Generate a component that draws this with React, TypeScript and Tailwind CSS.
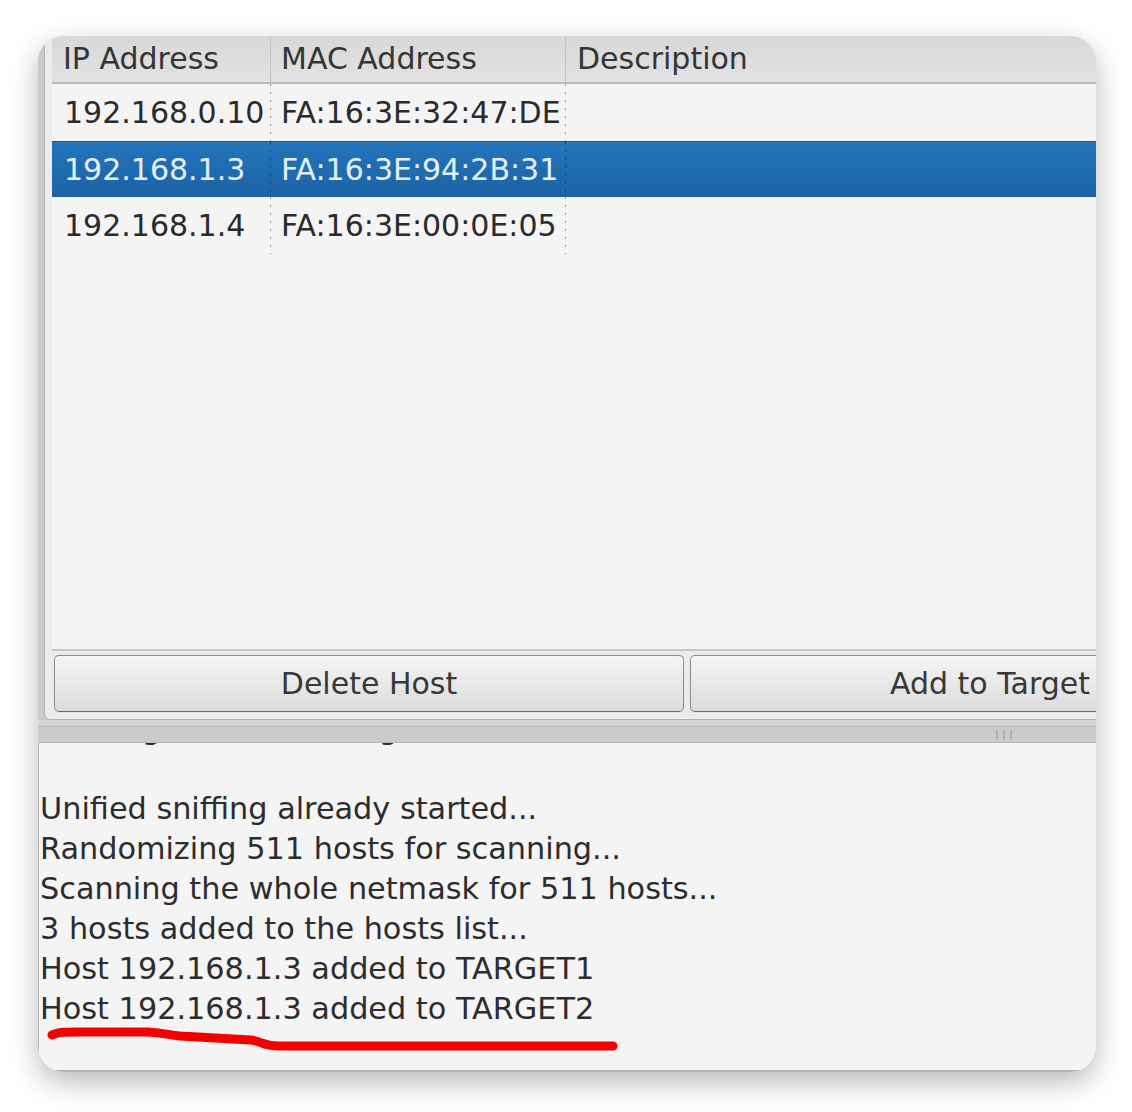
import React from 'react';

const hosts = [
  { ip: '192.168.0.10', mac: 'FA:16:3E:32:47:DE', selected: false },
  { ip: '192.168.1.3', mac: 'FA:16:3E:94:2B:31', selected: true },
  { ip: '192.168.1.4', mac: 'FA:16:3E:00:0E:05', selected: false },
];

const logLines = [
  'Starting Unified sniffing...',
  '',
  'Unified sniffing already started...',
  'Randomizing 511 hosts for scanning...',
  'Scanning the whole netmask for 511 hosts...',
  '3 hosts added to the hosts list...',
  'Host 192.168.1.3 added to TARGET1',
  'Host 192.168.1.3 added to TARGET2',
];

// dotted column divider used inside the rows
const Dots = ({ dark }: { dark?: boolean }) => (
  <div
    className={
      dark
        ? 'w-px self-stretch bg-[repeating-linear-gradient(to_bottom,#16416b_0px,#16416b_2px,transparent_2px,transparent_8px)]'
        : 'w-px self-stretch bg-[repeating-linear-gradient(to_bottom,#8c8c8c_0px,#8c8c8c_2px,transparent_2px,transparent_8px)]'
    }
  />
);

const App = () => {
  return (
    <div className="min-h-screen w-full bg-white pl-[38px] pt-[36px] font-['DejaVu_Sans',sans-serif]">
      <div className="flex h-[1036px] w-[1058px] flex-col overflow-hidden rounded-[26px] bg-[#d6d6d6] shadow-[0_10px_28px_rgba(0,0,0,0.28)]">
        {/* UPPER PANE: hosts list + buttons */}
        <div className="flex h-[684px] shrink-0 bg-[#cacaca] pl-[6px]">
          <div className="flex min-w-0 flex-1 flex-col rounded-bl-[6px] border-b border-l border-[#b2b2b2] bg-[#ececec] pb-[7px] pl-[7px]">
            {/* tree view */}
            <div className="flex min-h-0 flex-1 flex-col border-b-2 border-[#c4c4c4] bg-[#f4f4f4] text-[30px] leading-none">
              {/* header */}
              <div className="flex h-[48px] shrink-0 border-b-2 border-[#bcbcbc] bg-linear-to-b from-[#d8d8d8] to-[#e2e2e2] text-[#353535]">
                <div className="flex w-[218px] shrink-0 items-center pl-[11px]">IP Address</div>
                <div className="w-px bg-[#c2c2c2]" />
                <div className="flex w-[294px] shrink-0 items-center pl-[10px]">MAC Address</div>
                <div className="w-px bg-[#c2c2c2]" />
                <div className="flex flex-1 items-center pl-[11px]">Description</div>
              </div>

              {/* rows */}
              {hosts.map((h) => (
                <div
                  key={h.ip}
                  className={
                    h.selected
                      ? 'flex h-[56px] shrink-0 border-t border-[#1a5a96] bg-linear-to-b from-[#2375bb] to-[#1c63a4] text-[#e4eefa]'
                      : 'flex h-[57px] shrink-0 text-[#2b2b2b]'
                  }
                >
                  <div className="flex w-[218px] shrink-0 items-center pl-[12px]">{h.ip}</div>
                  <Dots dark={h.selected} />
                  <div className="flex w-[294px] shrink-0 items-center pl-[10px]">{h.mac}</div>
                  <Dots dark={h.selected} />
                  <div className="flex-1" />
                </div>
              ))}
            </div>

            {/* buttons */}
            <div className="mt-[4px] flex h-[57px] shrink-0 gap-[6px] pl-[2px] text-[30px] text-[#383838]">
              <button className="flex w-[630px] shrink-0 items-center justify-center rounded-[5px] border border-[#8f8f8f] border-b-[#6e6e6e] bg-linear-to-b from-[#f5f5f5] to-[#dcdcdc] shadow-[0_0_0_1px_#e6e6e6]">
                Delete Host
              </button>
              <button className="flex w-[600px] shrink-0 items-center justify-center rounded-[5px] border border-[#8f8f8f] border-b-[#6e6e6e] bg-linear-to-b from-[#f5f5f5] to-[#dcdcdc] shadow-[0_0_0_1px_#e6e6e6]">
                Add to Target
              </button>
            </div>
          </div>
        </div>

        {/* SPLITTER */}
        <div className="flex h-[23px] shrink-0 flex-col">
          <div className="h-[7px] border-b border-[#bdbdbd] bg-[#d5d5d5]" />
          <div className="flex flex-1 items-center justify-end gap-[5px] border-b border-[#b9b9b9] bg-[#cbcbcb] pr-[84px]">
            <div className="h-[10px] w-[2px] bg-[#b2b2b2]" />
            <div className="h-[10px] w-[2px] bg-[#b2b2b2]" />
            <div className="h-[10px] w-[2px] bg-[#b2b2b2]" />
          </div>
        </div>

        {/* LOG PANE */}
        <div className="relative min-h-0 flex-1 overflow-hidden border-b-2 border-l border-[#b3b3b3] bg-[#f4f4f4] pl-px">
          <div className="-mt-[34px] text-[30.3px] leading-[40px] whitespace-pre text-[#2d2d2d]">
            {logLines.map((l, i) => (
              <div key={i} className="h-[40px]">
                {l}
              </div>
            ))}
          </div>

          {/* hand drawn red underline */}
          <svg className="pointer-events-none absolute left-0 top-0" width="700" height="330" viewBox="0 0 700 330">
            <path
              d="M13 292 C20 288 30 289 60 289 L109 289 C125 290 130 292 141 293 L212 297 C222 298 224 303 240 303 L574 303"
              fill="none"
              stroke="#f50000"
              strokeWidth="9"
              strokeLinecap="round"
              strokeLinejoin="round"
            />
          </svg>
        </div>
      </div>
    </div>
  );
};

export default App;
